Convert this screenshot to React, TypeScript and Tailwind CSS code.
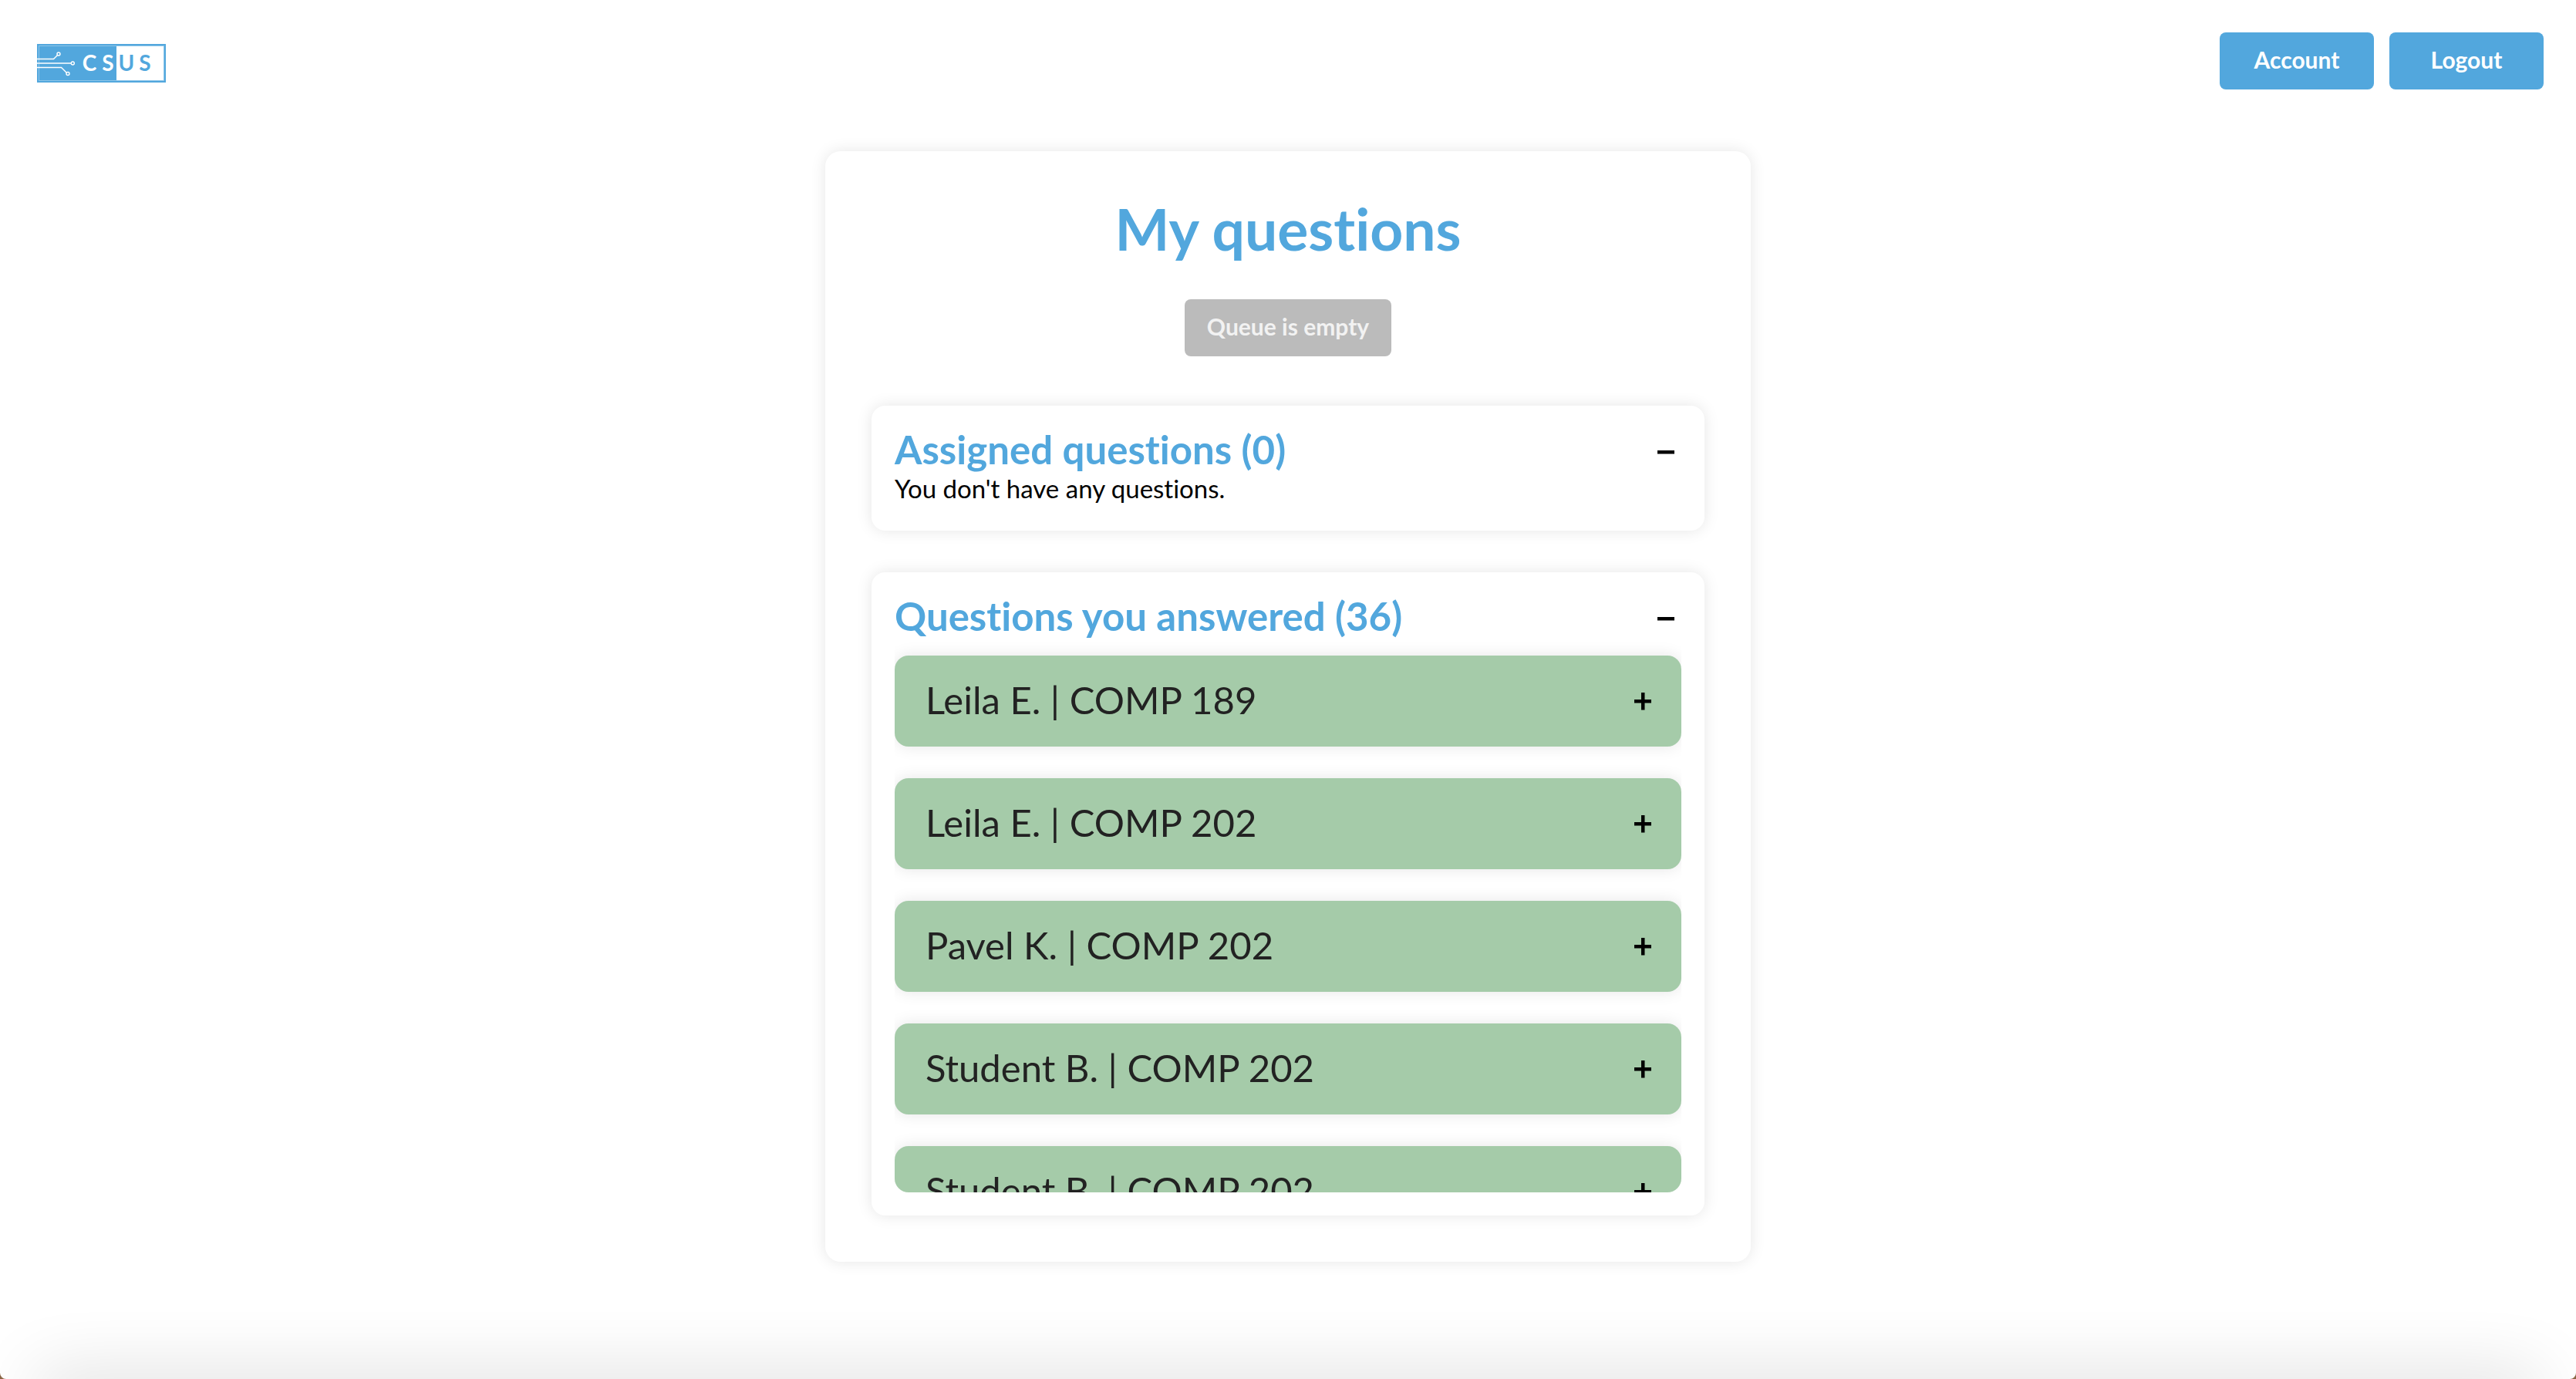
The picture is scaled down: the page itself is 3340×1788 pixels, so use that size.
import { useState, type ReactNode } from "react";

const answered = [
  "Leila E. | COMP 189",
  "Leila E. | COMP 202",
  "Pavel K. | COMP 202",
  "Student B. | COMP 202",
  "Student B. | COMP 202",
];

function Logo() {
  return (
    <svg width="167" height="50" viewBox="0 0 167 50" role="img" aria-label="CSUS">
      <rect width="167" height="50" fill="#52a7dd" />
      <rect x="2.5" y="2.5" width="162" height="45" fill="none" stroke="#8cc5e9" />
      <rect x="103" y="3" width="61" height="44" fill="#fff" />
      <g fill="none" stroke="#fff" strokeWidth="1.4">
        <path d="M0 19.5h21.5l5-5" />
        <path d="M0 25h44" strokeWidth="2" stroke="#d3e9f7" />
        <path d="M0 30.5h31.5l7 7" />
        <circle cx="28" cy="13" r="2" />
        <circle cx="46.3" cy="25" r="2" />
        <circle cx="40" cy="38.5" r="2" />
      </g>
      <g fontFamily="Lato, sans-serif" fontWeight="700" fontSize="28" textAnchor="middle">
        <g fill="#fff">
          <text x="68" y="35">C</text>
          <text x="92" y="35">S</text>
        </g>
        <g fill="#52a7dd">
          <text x="116" y="35">U</text>
          <text x="140" y="35">S</text>
        </g>
      </g>
    </svg>
  );
}

function ToggleIcon({ open }: { open: boolean }) {
  return (
    <svg width="24" height="24" viewBox="0 0 24 24" fill="#000" aria-hidden="true">
      <rect x="1" y="10" width="22" height="4.5" />
      {!open && <rect x="10" y="1" width="4.5" height="22.5" />}
    </svg>
  );
}

function NavButton({ children }: { children: ReactNode }) {
  return (
    <button
      type="button"
      className="h-[74px] w-[200px] rounded-lg bg-[#52a7dd] pb-1 text-[30px] leading-[36px] font-bold text-white"
    >
      {children}
    </button>
  );
}

function Section({ title, children }: { title: string; children: ReactNode }) {
  const [open, setOpen] = useState(true);
  return (
    <section className="rounded-[18px] p-[30px] shadow-[0_0_20px_rgba(0,0,0,0.1)]">
      <h2 className="text-[51px] leading-[54px] font-bold text-[#52a7dd]">
        <button
          type="button"
          aria-expanded={open}
          onClick={() => setOpen(!open)}
          className="flex w-full items-center justify-between pr-2 text-left"
        >
          <span className="pb-1.5">{title}</span>
          <ToggleIcon open={open} />
        </button>
      </h2>
      {open && children}
    </section>
  );
}

function QuestionRow({ label }: { label: string }) {
  return (
    <li className="rounded-[18px] bg-[#a5cba9] shadow-[0_0_20px_rgba(0,0,0,0.1)]">
      <button
        type="button"
        aria-expanded={false}
        className="flex h-[118px] w-full items-center justify-between pr-[38px] pl-10 text-left text-[49px] leading-[60px] text-[#222]"
      >
        <span className="pb-1">{label}</span>
        <ToggleIcon open={false} />
      </button>
    </li>
  );
}

export default function App() {
  return (
    <div className="bg-[#8a6544] font-['Lato',sans-serif] [font-variant-ligatures:none]">
      <div className="relative min-h-screen overflow-hidden rounded-b-lg bg-white">
        <header className="flex items-start justify-between px-[42px] pt-[42px]">
          <a href="#home" className="mt-[15px] ml-1.5 block">
            <Logo />
          </a>
          <nav className="flex gap-5">
            <NavButton>Account</NavButton>
            <NavButton>Logout</NavButton>
          </nav>
        </header>

        <main className="mx-auto mt-20 w-full max-w-[1200px] rounded-[20px] p-[60px] shadow-[0_0_20px_rgba(0,0,0,0.1)]">
          <div className="flex flex-col items-center">
            <h1 className="text-[75px] leading-[80px] font-bold text-[#52a7dd]">My questions</h1>
            <button
              type="button"
              disabled
              className="mt-[52px] h-[74px] w-[268px] rounded-lg bg-[#bbb] pb-1 text-[30px] leading-[36px] font-bold text-[#f2f2f2]"
            >
              Queue is empty
            </button>
          </div>

          <div className="mt-16 flex flex-col gap-[54px]">
            <Section title="Assigned questions (0)">
              <p className="pb-2 text-[33px] leading-[34px] text-black">You don't have any questions.</p>
            </Section>
            <Section title="Questions you answered (36)">
              <ul className="flex h-[714px] flex-col gap-[41px] overflow-y-auto rounded-b-[18px] pt-[18px] [scrollbar-width:none]">
                {answered.map((label, i) => (
                  <QuestionRow key={i} label={label} />
                ))}
              </ul>
            </Section>
          </div>
        </main>

        <div className="pointer-events-none absolute inset-x-12 top-full h-10 shadow-[0_0_90px_rgba(0,0,0,0.2)]" />
      </div>
    </div>
  );
}
